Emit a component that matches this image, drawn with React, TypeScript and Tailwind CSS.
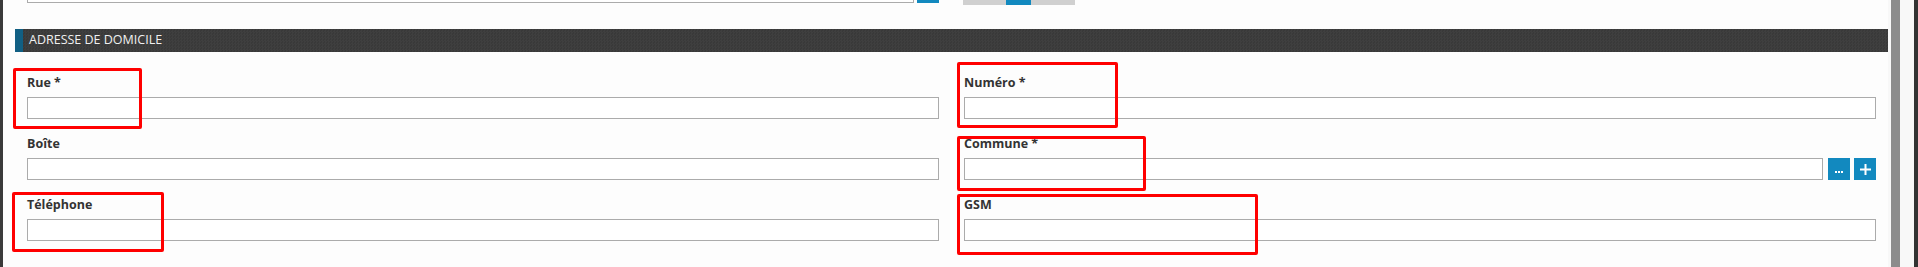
const fields = [
  { label: 'Rue *', side: 'left' },
  { label: 'Numéro *', side: 'right' },
  { label: 'Boîte', side: 'left' },
  { label: 'Commune *', side: 'right', picker: true },
  { label: 'Téléphone', side: 'left' },
  { label: 'GSM', side: 'right' },
] as const

// red annotation boxes drawn over the form
const marks = [
  { id: 'rue', cls: 'left-[13px] top-[68px] w-[129px] h-[61px]' },
  { id: 'numero', cls: 'left-[957px] top-[62px] w-[161px] h-[66px]' },
  { id: 'commune', cls: 'left-[957px] top-[136px] w-[189px] h-[55px]' },
  { id: 'tel', cls: 'left-[12px] top-[192px] w-[152px] h-[60px]' },
  { id: 'gsm', cls: 'left-[957px] top-[194px] w-[301px] h-[61px]' },
]

function Field({ label, picker }: { label: string; picker?: boolean }) {
  return (
    <div>
      <div className="text-[12.5px] font-bold leading-[17px] text-[#333]">{label}</div>
      <div className="mt-[6px] flex">
        <div className="h-[22px] flex-1 border border-[#ababab] bg-white" />
        {picker && (
          <>
            <button className="ml-[5px] flex h-[22px] w-[22px] items-end justify-center gap-[1px] bg-[#1289bf] pb-[7px]">
              <span className="h-[2px] w-[2px] bg-white" />
              <span className="h-[2px] w-[2px] bg-white" />
              <span className="h-[2px] w-[2px] bg-white" />
            </button>
            <button className="ml-[4px] flex h-[22px] w-[22px] items-center justify-center bg-[#1289bf]">
              <svg width="11" height="11" viewBox="0 0 11 11">
                <path d="M5.5 0v11M0 5.5h11" stroke="white" strokeWidth="2" />
              </svg>
            </button>
          </>
        )}
      </div>
    </div>
  )
}

export default function App() {
  return (
    <div className="relative flex h-[267px] w-full overflow-hidden bg-[#fdfdfd] font-['Open_Sans',sans-serif]">
      <div className="w-[3px] bg-[#3a3a3a]" />

      <div className="flex-1 pl-[12px]">
        <div className="flex h-[29px] items-start pl-[12px]">
          <div className="-mt-[19px] h-[22px] w-[887px] border border-[#ababab] bg-white" />
          <div className="-mt-[19px] ml-[3px] h-[22px] w-[22px] bg-[#1289bf]" />
          <div className="-mt-[17px] ml-[24px] flex h-[22px] w-[112px] bg-[#d0d0d0]">
            <div className="ml-[43px] w-[25px] bg-[#1289bf]" />
          </div>
        </div>

        <div className="flex h-[23px] items-center bg-[#3c3c3c] bg-[repeating-conic-gradient(#3f3f3f_0_25%,#393939_0_50%)] bg-[length:3px_3px]">
          <div className="h-full w-[8px] bg-[#115f83]" />
          <div className="pl-[6px] text-[12.5px] text-[#f0f0f0]">ADRESSE DE DOMICILE</div>
        </div>

        <div className="grid grid-cols-2 gap-x-[25px] gap-y-[16px] px-[12px] pt-[22px]">
          {fields.map((f) => (
            <Field key={f.label} label={f.label} picker={'picker' in f ? f.picker : false} />
          ))}
        </div>
      </div>

      <div className="w-[26px] bg-[#f8f8f8] pl-[3px]">
        <div className="h-full w-[9px] bg-[#8c8c8c]" />
      </div>
      <div className="w-[4px] bg-[#333]" />

      {marks.map((m) => (
        <div key={m.id} className={`absolute rounded-[2px] border-[3px] border-[#ff0000] ${m.cls}`} />
      ))}
    </div>
  )
}
